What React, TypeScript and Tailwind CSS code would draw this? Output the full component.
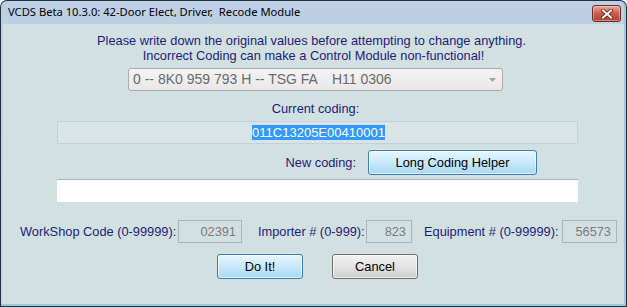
import React from "react";

const arial = { fontFamily: '"Liberation Sans", Arial, sans-serif' };

export default function App() {
  return (
    <div className="w-[627px] h-[307px] overflow-hidden bg-white">
      <div className="w-[627px] h-[307px] rounded-t-[7px] bg-[#23303c] p-px flex flex-col">
        <div className="flex-1 flex flex-col rounded-t-[6px] bg-gradient-to-b from-[#bccfe4] to-[#c9d9e8] border-r-[2px] border-b-[2px] border-r-[#8ccde6] border-b-[#8ccde6]">
          {/* Title bar */}
          <div className="h-[23px] flex items-center pl-[7px] pr-[3px] relative">
            <span
              className="text-[11.2px] text-black whitespace-pre"
              style={{ fontFamily: '"Noto Sans", "Open Sans", sans-serif' }}
            >
              VCDS Beta 10.3.0: 42-Door Elect, Driver,  Recode Module
            </span>
            <div className="ml-auto mt-[2px] w-[29px] h-[17px] rounded-[3px] border border-[#6e2a24] bg-gradient-to-b from-[#e9a99c] via-[#c85a4e] to-[#b8432f] flex items-center justify-center shadow-[inset_0_0_0_1px_rgba(255,255,255,0.35)]">
              <svg width="12" height="10" viewBox="0 0 12 10">
                <path d="M2 1.5 L10 8.5 M10 1.5 L2 8.5" stroke="#5a1f18" strokeWidth="3.6" strokeLinecap="square" />
                <path d="M2 1.5 L10 8.5 M10 1.5 L2 8.5" stroke="#ffffff" strokeWidth="2" strokeLinecap="square" />
              </svg>
            </div>
          </div>
          {/* Content */}
          <div className="flex-1 ml-[2px] bg-[#d3e0e2] flex flex-col text-[12.8px] text-[#1c1c7c]" style={arial}>
            <div className="pt-[9px] leading-[15px] text-center pr-[4px]">
              Please write down the original values before attempting to change anything.
            </div>
            <div className="leading-[15px] text-center">
              Incorrect Coding can make a Control Module non-functional!
            </div>
            <div className="mt-[5px] ml-[125px] w-[375px] h-[23px] rounded-[3px] border border-[#acacac] bg-gradient-to-b from-[#f4f4f4] to-[#e8e8e8] flex items-center pl-[4px] pr-[6px] text-[#6a6a6a] text-[14px]">
              <span className="whitespace-pre">0 -- 8K0 959 793 H -- TSG FA</span>
              <span className="ml-[14px] whitespace-pre">H11 0306</span>
              <svg className="ml-auto" width="7" height="4" viewBox="0 0 7 4">
                <path d="M0 0 L7 0 L3.5 4 Z" fill="#a0a0a0" />
              </svg>
            </div>
            <div className="mt-[10px] leading-[15px] text-center pl-[4px]">Current coding:</div>
            <div className="mt-[5px] ml-[54px] w-[521px] h-[23px] border border-[#c0d2dd] bg-[#d9e4e6] flex items-center justify-center pl-[2px]">
              <span className="bg-[#3399ff] text-white leading-[15px] text-[13px]">011C13205E00410001</span>
            </div>
            <div className="mt-[6px] flex items-center">
              <div className="w-[353px] text-right">New coding:</div>
              <button className="ml-[12px] w-[169px] h-[25px] rounded-[3px] border border-[#3c7fb1] bg-gradient-to-b from-[#eaf6fd] via-[#c9e9fc] to-[#a7d9f5] text-black text-[12.8px] shadow-[inset_0_0_0_1px_rgba(255,255,255,0.6)]" style={arial}>
                Long Coding Helper
              </button>
            </div>
            <div className="mt-[4px] ml-[54px] w-[521px] h-[23px] border-t border-[#a8b0b4] bg-white" />
            <div className="mt-[18px] flex items-center">
              <div className="ml-[17px] w-[158px] whitespace-nowrap">WorkShop Code (0-99999):</div>
              <div className="w-[64px] h-[23px] border border-[#adb5b8] text-right pr-[5px] leading-[21px] text-[#7b7b7b]">02391</div>
              <div className="ml-[16px] w-[108px] whitespace-nowrap">Importer # (0-999):</div>
              <div className="w-[46px] h-[23px] border border-[#adb5b8] text-right pr-[5px] leading-[21px] text-[#7b7b7b]">823</div>
              <div className="ml-[12px] w-[138px] whitespace-nowrap">Equipment # (0-99999):</div>
              <div className="w-[55px] h-[23px] border border-[#adb5b8] text-right pr-[5px] leading-[21px] text-[#7b7b7b]">56573</div>
            </div>
            <div className="mt-[11px] flex">
              <button className="ml-[214px] w-[86px] h-[25px] rounded-[3px] border border-[#3c7fb1] bg-gradient-to-b from-[#eaf6fd] via-[#c9e9fc] to-[#a7d9f5] text-black text-[12.8px] shadow-[inset_0_0_0_1px_rgba(255,255,255,0.6)]" style={arial}>
                Do It!
              </button>
              <button className="ml-[29px] w-[86px] h-[25px] rounded-[3px] border border-[#707070] bg-gradient-to-b from-[#f2f2f2] via-[#e4e4e4] to-[#cfcfcf] text-black text-[12.8px] shadow-[inset_0_0_0_1px_rgba(255,255,255,0.6)]" style={arial}>
                Cancel
              </button>
            </div>
          </div>
        </div>
      </div>
    </div>
  );
}
